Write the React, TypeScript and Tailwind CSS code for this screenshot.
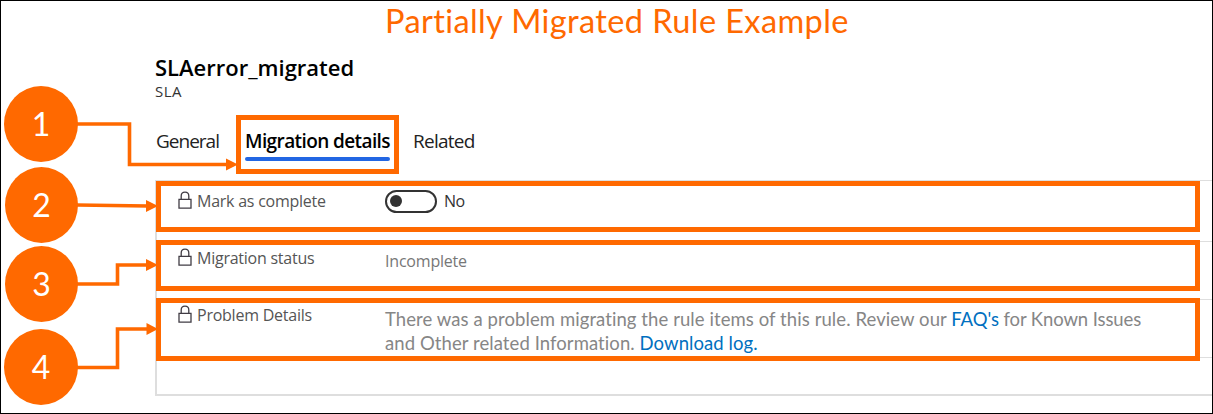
import type { ReactNode } from "react";

function LockIcon() {
  return (
    <svg width="15" height="19" viewBox="0 0 15 19" fill="none" stroke="#403c44" strokeWidth="1.3">
      <path d="M2 8.3H14V17.1H2Z" />
      <path d="M4.2 8.3V5C4.2 2.500 5.8 1.100 8 1.100S11.800 2.500 11.800 5V8.300" />
    </svg>
  );
}

function Callout({ className }: { className: string }) {
  return <div className={`pointer-events-none absolute border-[5px] border-[#ff6900] ${className}`} />;
}

function Step({ n, className }: { n: number; className: string }) {
  return (
    <div
      className={`flex h-[76px] items-center justify-center rounded-[50%] bg-[#ff6900] font-[Lato,sans-serif] text-[32px] leading-none text-white ${className}`}
    >
      {n}
    </div>
  );
}

function Row({
  label,
  children,
  className,
  callout,
}: {
  label: string;
  children: ReactNode;
  className: string;
  callout: string;
}) {
  return (
    <div className={`relative flex border-b border-[#dedede] pl-[20px] ${className}`}>
      <div className="flex h-[22px] w-[208px] items-start gap-[5px]">
        <LockIcon />
        <span className="text-[16px] leading-[20px] tracking-[-0.24px] text-[#555]">{label}</span>
      </div>
      {children}
      <Callout className={callout} />
    </div>
  );
}

export default function App() {
  return (
    <div className="relative flex h-[414px] w-[1213px] flex-col overflow-hidden border border-black bg-white font-['Open_Sans','Noto_Sans',sans-serif]">
      <h1 className="h-[54px] pl-[384px] font-[Lato,sans-serif] text-[32.5px] leading-[40px] tracking-[0.4px] whitespace-nowrap text-[#ff6900]">
        Partially Migrated Rule Example
      </h1>
      <div className="flex flex-1">
        <aside className="flex w-[154px] flex-col pt-[31px] pl-[3px]">
          <Step n={1} className="w-[74px]" />
          <Step n={2} className="mt-[5px] ml-px w-[73px]" />
          <Step n={3} className="mt-[3px] ml-px w-[73px]" />
          <Step n={4} className="mt-[7px] w-[74px]" />
        </aside>
        <main className="flex flex-1 flex-col whitespace-nowrap">
          <h2 className="h-[28px] text-[22px] leading-[24px] font-semibold text-black">SLAerror_migrated</h2>
          <p className="h-[32px] text-[15px] leading-[16px] tracking-[0.5px] text-[#333]">SLA</p>
          <nav className="flex h-[65px] text-[19px] leading-[26px] text-[#222]">
            <div className="w-[81px] pt-[13px] pl-px tracking-[-1px]">General</div>
            <div className="relative h-[59px] w-[163px] pt-[13px] pl-[9px]">
              <span className="font-semibold tracking-[-0.6px] text-black">Migration details</span>
              <div className="mt-[3px] h-[4px] w-[145px] rounded-full bg-[#2266e3]" />
              <Callout className="inset-0" />
            </div>
            <div className="pt-[13px] pl-[14px] tracking-[-0.75px]">Related</div>
          </nav>
          <section className="h-[216px] border-t border-b-2 border-l-2 border-[#dedede]">
            <Row className="h-[61px] pt-[10px]" callout="-left-px top-0 h-[51px] w-[1044px]" label="Mark as complete">
              <div className="-mt-[1px] flex h-[22px] items-center">
                <div className="flex h-[23px] w-[52px] items-center rounded-full border-[2.5px] border-[#333] pl-[3px]">
                  <div className="size-[12px] rounded-full bg-[#333]" />
                </div>
                <span className="pl-[7px] text-[16px] leading-[20px] tracking-[-0.5px] text-[#333]">No</span>
              </div>
            </Row>
            <Row className="h-[58px] pt-[6px]" callout="-left-px -top-[2px] h-[51px] w-[1044px]" label="Migration status">
              <span className="pt-[3px] text-[16px] leading-[20px] tracking-[-0.2px] text-[#777]">Incomplete</span>
            </Row>
            <Row className="h-[58px] pt-[5px]" callout="-left-px -top-[2px] h-[63px] w-[1044px]" label="Problem Details">
              <p className="pt-[2px] font-[Lato,sans-serif] text-[18.5px] leading-[24px] tracking-[0.08px] text-[#868686]">
                There was a problem migrating the rule items of this rule. Review our{" "}
                <a className="tracking-[-0.1px] text-[#0070c0]">FAQ's</a>
                <span className="tracking-[-0.1px]"> for Known Issues</span>
                <br />
                and Other related Information. <a className="text-[#0070c0]">Download log.</a>
              </p>
            </Row>
          </section>
        </main>
      </div>
      <svg className="pointer-events-none absolute -top-px -left-px" width="240" height="414" fill="none" stroke="#ff6900" strokeWidth="3.6">
        <path d="M77 124H129.5V164.5H228" />
        <path d="M77 205L148 206" />
        <path d="M77 284H117.5V265H148" />
        <path d="M77 367.5H117.5V329H148" />
        <g fill="#ff6900" stroke="none">
          <path d="M226 158.5L238 164.5L226 170.5Z" />
          <path d="M146 200L158 206L146 212Z" />
          <path d="M146 259L158 265L146 271Z" />
          <path d="M146.500 323L158 329L146.500 335Z" />
        </g>
      </svg>
    </div>
  );
}
